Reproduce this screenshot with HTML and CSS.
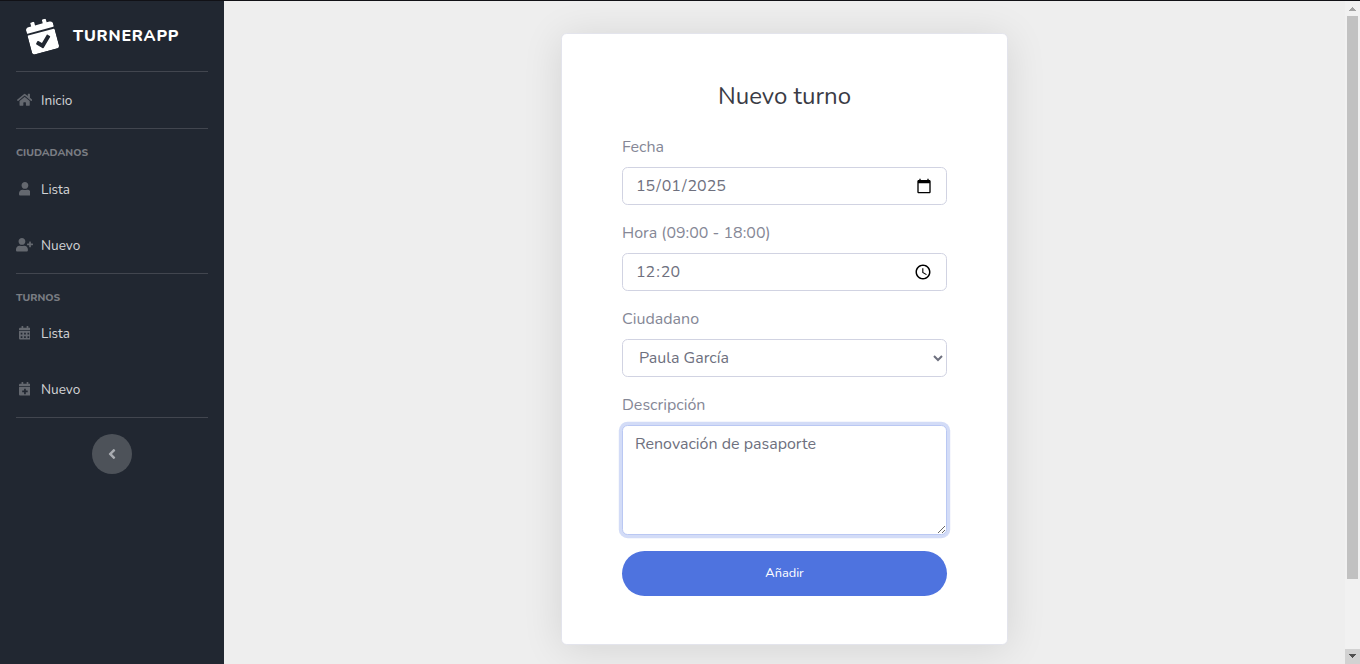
FILE: index.html
```html
<!DOCTYPE html>
<html lang="es">
<head>
<meta charset="utf-8">
<title>TurnerApp - Nuevo turno</title>
<link rel="stylesheet" href="styles.css">
</head>
<body>
<div class="page">
  <nav class="sidebar">
    <a class="brand">
      <svg class="brand-icon" viewBox="0 0 448 512"><path d="M436 160H12c-6.627 0-12-5.373-12-12v-36c0-26.51 21.49-48 48-48h48V12c0-6.627 5.373-12 12-12h40c6.627 0 12 5.373 12 12v52h128V12c0-6.627 5.373-12 12-12h40c6.627 0 12 5.373 12 12v52h48c26.51 0 48 21.49 48 48v36c0 6.627-5.373 12-12 12zM12 192h424c6.627 0 12 5.373 12 12v260c0 26.51-21.49 48-48 48H48c-26.51 0-48-21.49-48-48V204c0-6.627 5.373-12 12-12zm333.296 95.947l-28.169-28.398c-4.667-4.705-12.265-4.736-16.97-.068L194.12 364.665l-45.98-46.352c-4.667-4.705-12.266-4.736-16.971-.068l-28.397 28.17c-4.705 4.667-4.736 12.265-.068 16.97l82.601 83.269c4.667 4.705 12.265 4.736 16.97.068l142.953-141.805c4.705-4.667 4.736-12.265.068-16.97z"/></svg>
      <span class="brand-text">TURNERAPP</span>
    </a>
    <hr class="divider">
    <a class="nav-link"><span class="icon"><svg viewBox="0 0 576 512"><path d="M280.37 148.26L96 300.11V464a16 16 0 0 0 16 16l112.06-.29a16 16 0 0 0 15.92-16V368a16 16 0 0 1 16-16h64a16 16 0 0 1 16 16v95.64a16 16 0 0 0 16 16.05L464 480a16 16 0 0 0 16-16V300L295.67 148.26a12.19 12.19 0 0 0-15.3 0zM571.6 251.47L488 182.56V44.05a12 12 0 0 0-12-12h-56a12 12 0 0 0-12 12v72.61L318.47 43a48 48 0 0 0-61 0L4.34 251.47a12 12 0 0 0-1.6 16.9l25.5 31A12 12 0 0 0 45.15 301l235.22-193.74a12.19 12.19 0 0 1 15.3 0L530.9 301a12 12 0 0 0 16.9-1.6l25.5-31a12 12 0 0 0-1.7-16.93z"/></svg></span><span class="nav-text">Inicio</span></a>
    <hr class="divider">
    <div class="heading">CIUDADANOS</div>
    <a class="nav-link"><span class="icon"><svg viewBox="0 0 448 512"><path d="M224 256c70.7 0 128-57.3 128-128S294.7 0 224 0 96 57.3 96 128s57.3 128 128 128zm89.6 32h-16.7c-22.2 10.2-46.9 16-72.9 16s-50.6-5.8-72.9-16h-16.7C60.2 288 0 348.2 0 422.4V464c0 26.500 21.500 48 48 48h352c26.500 0 48-21.500 48-48v-41.600c0-74.200-60.200-134.400-134.400-134.400z"/></svg></span><span class="nav-text">Lista</span></a>
    <a class="nav-link"><span class="icon"><svg viewBox="0 0 640 512"><path d="M624 208h-64v-64c0-8.800-7.200-16-16-16h-32c-8.800 0-16 7.200-16 16v64h-64c-8.800 0-16 7.200-16 16v32c0 8.800 7.200 16 16 16h64v64c0 8.800 7.200 16 16 16h32c8.800 0 16-7.200 16-16v-64h64c8.800 0 16-7.200 16-16v-32c0-8.800-7.200-16-16-16zm-400 48c70.700 0 128-57.300 128-128S294.700 0 224 0 96 57.300 96 128s57.300 128 128 128zm89.600 32h-16.700c-22.200 10.200-46.900 16-72.900 16s-50.600-5.800-72.900-16h-16.700C60.200 288 0 348.200 0 422.400V464c0 26.500 21.500 48 48 48h352c26.500 0 48-21.500 48-48v-41.600c0-74.200-60.200-134.400-134.400-134.400z"/></svg></span><span class="nav-text">Nuevo</span></a>
    <hr class="divider">
    <div class="heading turnos">TURNOS</div>
    <a class="nav-link"><span class="icon"><svg viewBox="0 0 448 512"><path fill-rule="evenodd" d="M436 160H12c-6.600 0-12-5.400-12-12v-36c0-26.500 21.500-48 48-48h48V12c0-6.600 5.400-12 12-12h40c6.600 0 12 5.400 12 12v52h128V12c0-6.600 5.400-12 12-12h40c6.600 0 12 5.400 12 12v52h48c26.500 0 48 21.500 48 48v36c0 6.600-5.400 12-12 12zM12 192h424c6.600 0 12 5.400 12 12v260c0 26.500-21.500 48-48 48H48c-26.500 0-48-21.500-48-48V204c0-6.600 5.400-12 12-12zM64 256v64h64v-64zM192 256v64h64v-64zM320 256v64h64v-64zM64 384v64h64v-64zM192 384v64h64v-64zM320 384v64h64v-64z"/></svg></span><span class="nav-text">Lista</span></a>
    <a class="nav-link"><span class="icon"><svg viewBox="0 0 448 512"><path fill-rule="evenodd" d="M436 160H12c-6.600 0-12-5.400-12-12v-36c0-26.500 21.500-48 48-48h48V12c0-6.600 5.400-12 12-12h40c6.600 0 12 5.400 12 12v52h128V12c0-6.600 5.400-12 12-12h40c6.600 0 12 5.400 12 12v52h48c26.500 0 48 21.500 48 48v36c0 6.600-5.400 12-12 12zM12 192h424c6.600 0 12 5.400 12 12v260c0 26.500-21.500 48-48 48H48c-26.500 0-48-21.500-48-48V204c0-6.600 5.400-12 12-12zM316 324h-60v-60c0-6.600-5.400-12-12-12h-40c-6.600 0-12 5.400-12 12v60h-60c-6.600 0-12 5.400-12 12v40c0 6.600 5.400 12 12 12h60v60c0 6.600 5.400 12 12 12h40c6.600 0 12-5.400 12-12v-60h60c6.600 0 12-5.400 12-12v-40c0-6.600-5.400-12-12-12z"/></svg></span><span class="nav-text">Nuevo</span></a>
    <hr class="divider">
    <button class="toggle" type="button" aria-label="Contraer"><svg viewBox="0 0 256 512"><path d="M31.7 239l136-136c9.400-9.400 24.600-9.400 33.900 0l22.600 22.600c9.400 9.400 9.400 24.600 0 33.900L127.900 256l96.400 96.400c9.400 9.400 9.400 24.600 0 33.900L201.700 409c-9.400 9.400-24.600 9.400-33.900 0l-136-136c-9.500-9.400-9.500-24.600-.1-34z"/></svg></button>
  </nav>
  <main class="content">
    <form class="card">
      <h1 class="title">Nuevo turno</h1>
      <div class="group">
        <label>Fecha</label>
        <div class="control"><span class="value"><span class="field">15</span>/<span class="field">01</span>/<span class="field">2025</span></span>
          <svg class="picker calendar" viewBox="0 0 24 24"><path d="M20 3h-1V1h-2v2H7V1H5v2H4c-1.100 0-2 .9-2 2v16c0 1.100.9 2 2 2h16c1.100 0 2-.9 2-2V5c0-1.100-.9-2-2-2zm0 18H4V8h16v13z"/></svg></div>
      </div>
      <div class="group">
        <label>Hora (09:00 - 18:00)</label>
        <div class="control"><span class="value"><span class="field">12</span>:<span class="field">20</span></span>
          <svg class="picker clock" viewBox="0 0 24 24"><path d="M11.990 2C6.470 2 2 6.480 2 12s4.470 10 9.990 10C17.520 22 22 17.520 22 12S17.520 2 11.990 2zM12 20c-4.420 0-8-3.580-8-8s3.580-8 8-8 8 3.580 8 8-3.580 8-8 8zm.5-13H11v6l5.250 3.150.75-1.230-4.500-2.670z"/></svg></div>
      </div>
      <div class="group">
        <label>Ciudadano</label>
        <select class="control"><option>Paula García</option></select>
      </div>
      <div class="group">
        <label>Descripción</label>
        <textarea class="control textarea">Renovación de pasaporte</textarea>
      </div>
      <button class="submit" type="button">Añadir</button>
    </form>
  </main>
  <div class="scrollbar">
    <svg class="arrow" viewBox="0 0 15 15"><path fill="#a3a3a3" d="M7 6h1v1h1v1h1v1h1v1H4V9h1V8h1V7h1z"/></svg>
    <div class="thumb"></div>
    <svg class="arrow down" viewBox="0 0 15 15"><path fill="#505050" d="M4 5h7v1h-1v1H9v1H8v1H7V8H6V7H5V6H4z"/></svg>
  </div>
</div>
</body>
</html>
```
FILE: styles.css
```css
* { box-sizing: border-box; }
body {
  margin: 0;
  height: 664px;
  overflow: hidden;
  font-family: Nunito, Lato, "Open Sans", sans-serif;
  font-size: 16px;
  line-height: 1.5;
  color: #858796;
  background: #eee;
}
.page {
  display: flex;
  height: 664px;
  border-top: 1px solid #111116;
}
.sidebar {
  width: 224px;
  flex: none;
  background: #212731;
}
.brand {
  display: flex;
  align-items: center;
  height: 70px;
  padding-left: 28px;
  gap: 17px;
  color: #fff;
}
.brand-icon {
  width: 28px;
  height: 32px;
  margin-bottom: 1px;
  fill: #fff;
  transform: rotate(-15deg);
}
.brand-text {
  font-size: 16px;
  font-weight: 800;
  letter-spacing: 0.8px;
}
.divider {
  height: 1px;
  margin: 0 16px;
  border: 0;
  background: #42464f;
}
.nav-link {
  display: flex;
  align-items: center;
  height: 56px;
  padding-left: 16px;
  gap: 8px;
  font-size: 13.6px;
  color: #d3d4d6;
}
.nav-text { padding-top: 2px; }
.icon {
  width: 17px;
  display: flex;
  justify-content: center;
}
.icon svg {
  height: 13.6px;
  flex: none;
  fill: #64686f;
}
.heading {
  height: 32px;
  padding: 16px 16px 0;
  font-size: 10.4px;
  line-height: 15.6px;
  font-weight: 800;
  color: #7a7d83;
}
.turnos { height: 31px; }
.toggle {
  display: flex;
  align-items: center;
  justify-content: center;
  width: 40px;
  height: 40px;
  margin: 16px auto 0;
  padding: 0;
  border: 0;
  border-radius: 50%;
  background: #4d5259;
}
.toggle svg {
  height: 16px;
  margin-right: 1px;
  fill: #a9acb1;
}
.content {
  flex: 1;
  display: flex;
  justify-content: center;
  align-items: flex-start;
  padding-top: 32px;
}
.card {
  width: 447px;
  height: 612px;
  padding: 44px 60px 0;
  border: 1px solid #e3e4ec;
  border-radius: 5.6px;
  background: #fff;
  box-shadow: 0 4px 40px rgba(0, 0, 0, 0.11);
}
.title {
  margin: 0 0 21px;
  font-size: 24px;
  font-weight: 400;
  line-height: 36px;
  text-align: center;
  color: #3a3b45;
}
.group { margin-bottom: 16px; }
.group label {
  display: block;
  height: 24px;
  margin-bottom: 8px;
  line-height: 24px;
}
.control {
  display: flex;
  align-items: center;
  width: 100%;
  height: 38px;
  padding: 6px 12px;
  border: 1px solid #d1d3e2;
  border-radius: 5.6px;
  background: #fff;
  font: inherit;
  color: #6e707e;
}
.value { flex: 1; }
.field { padding: 0 1px; }
.picker { width: 16px; height: 16px; margin-right: 2px; fill: #000; }
.clock { width: 18px; height: 18px; margin: 0 2.5px 1px 0; }
.textarea {
  display: block;
  height: 110px;
  outline: 0;
  border-color: #bac8f3;
  box-shadow: 0 0 0 3.2px rgba(78, 115, 223, 0.25);
}
.submit {
  display: block;
  width: 325px;
  height: 45px;
  padding: 0 0 2px;
  border: 0;
  border-radius: 23px;
  background: #4e73df;
  color: #fff;
  font-family: inherit;
  font-size: 12.8px;
}
.scrollbar {
  display: flex;
  flex-direction: column;
  width: 15px;
  flex: none;
  background: #f1f1f1;
}
.arrow { width: 15px; height: 15px; shape-rendering: crispEdges; }
.thumb { width: 11px; height: 563px; margin-left: 2px; background: #c1c1c1; }
.down { margin-top: auto; background: #d2d2d2; }
```
